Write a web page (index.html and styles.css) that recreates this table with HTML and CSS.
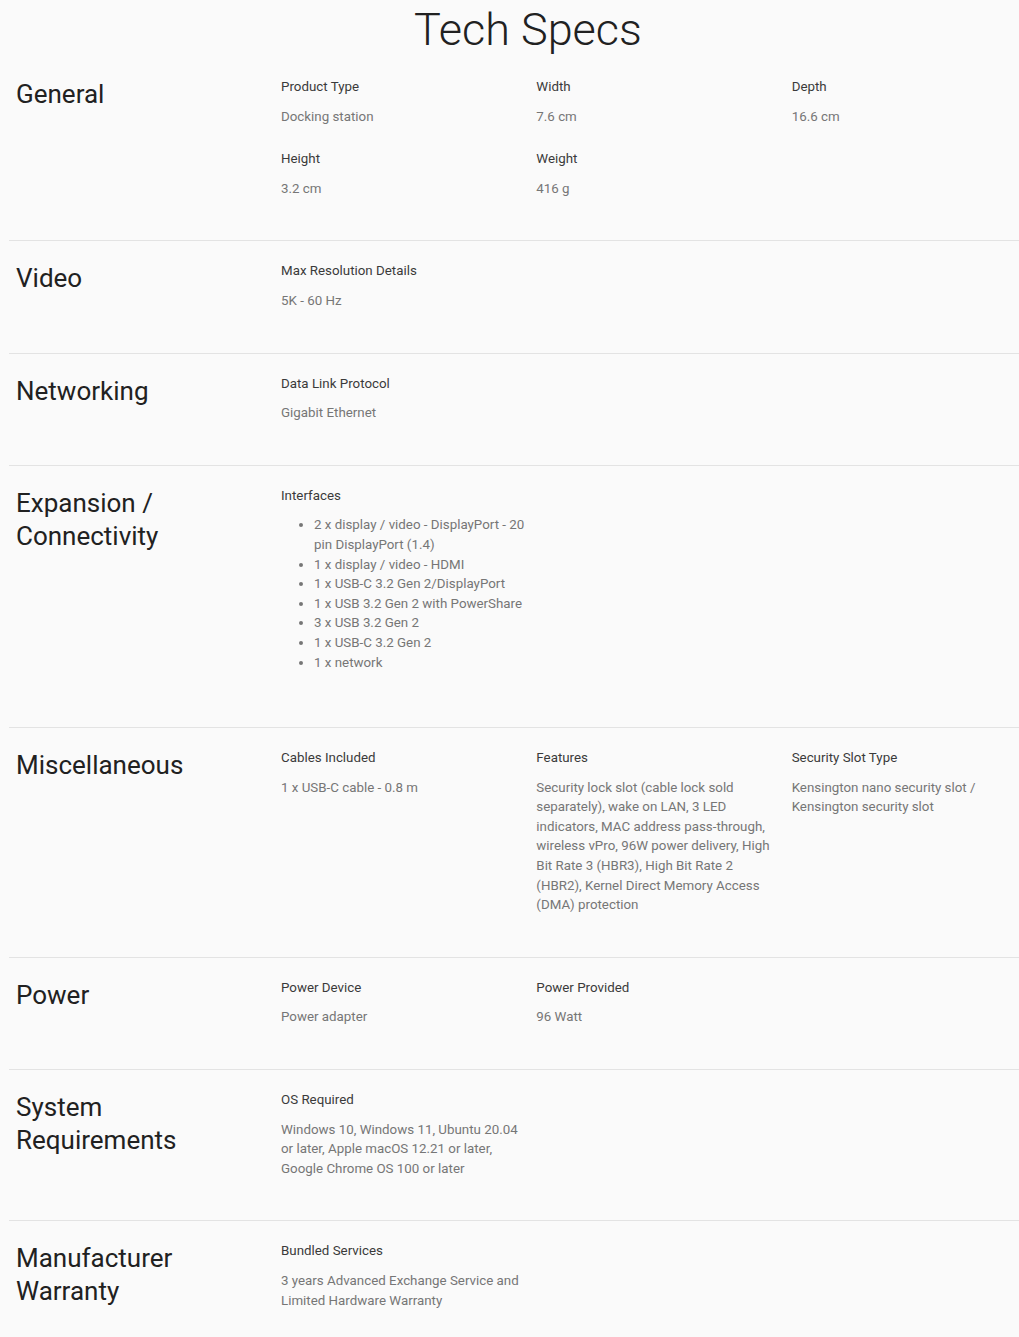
FILE: index.html
```html
<!DOCTYPE html>
<html lang="en">
<head>
<meta charset="utf-8">
<title>Tech Specs</title>
<link rel="stylesheet" href="styles.css">
</head>
<body>
<main class="specs">
  <h1 class="specs-title">Tech Specs</h1>

  <section class="spec-group spec-group--first">
    <h2 class="group-name">General</h2>
    <dl class="group-items">
      <div class="item"><dt class="item-label">Product Type</dt><dd class="item-value">Docking station</dd></div>
      <div class="item"><dt class="item-label">Width</dt><dd class="item-value">7.6 cm</dd></div>
      <div class="item"><dt class="item-label">Depth</dt><dd class="item-value">16.6 cm</dd></div>
      <div class="item"><dt class="item-label">Height</dt><dd class="item-value">3.2 cm</dd></div>
      <div class="item"><dt class="item-label">Weight</dt><dd class="item-value">416 g</dd></div>
    </dl>
  </section>

  <section class="spec-group">
    <h2 class="group-name">Video</h2>
    <dl class="group-items">
      <div class="item"><dt class="item-label">Max Resolution Details</dt><dd class="item-value">5K - 60 Hz</dd></div>
    </dl>
  </section>

  <section class="spec-group">
    <h2 class="group-name">Networking</h2>
    <dl class="group-items">
      <div class="item"><dt class="item-label">Data Link Protocol</dt><dd class="item-value">Gigabit Ethernet</dd></div>
    </dl>
  </section>

  <section class="spec-group">
    <h2 class="group-name">Expansion / Connectivity</h2>
    <dl class="group-items">
      <div class="item">
        <dt class="item-label">Interfaces</dt>
        <dd class="item-value">
          <ul class="value-list">
            <li>2 x display / video - DisplayPort - 20 pin DisplayPort (1.4)</li>
            <li>1 x display / video - HDMI</li>
            <li>1 x USB-C 3.2 Gen 2/DisplayPort</li>
            <li>1 x USB 3.2 Gen 2 with PowerShare</li>
            <li>3 x USB 3.2 Gen 2</li>
            <li>1 x USB-C 3.2 Gen 2</li>
            <li>1 x network</li>
          </ul>
        </dd>
      </div>
    </dl>
  </section>

  <section class="spec-group">
    <h2 class="group-name">Miscellaneous</h2>
    <dl class="group-items">
      <div class="item"><dt class="item-label">Cables Included</dt><dd class="item-value">1 x USB-C cable - 0.8 m</dd></div>
      <div class="item"><dt class="item-label">Features</dt><dd class="item-value">Security lock slot (cable lock sold separately), wake on LAN, 3 LED indicators, MAC address pass-through, wireless vPro, 96W power delivery, High Bit Rate 3 (HBR3), High Bit Rate 2 (HBR2), Kernel Direct Memory Access (DMA) protection</dd></div>
      <div class="item"><dt class="item-label">Security Slot Type</dt><dd class="item-value">Kensington nano security slot / Kensington security slot</dd></div>
    </dl>
  </section>

  <section class="spec-group">
    <h2 class="group-name">Power</h2>
    <dl class="group-items">
      <div class="item"><dt class="item-label">Power Device</dt><dd class="item-value">Power adapter</dd></div>
      <div class="item"><dt class="item-label">Power Provided</dt><dd class="item-value">96 Watt</dd></div>
    </dl>
  </section>

  <section class="spec-group">
    <h2 class="group-name">System Requirements</h2>
    <dl class="group-items">
      <div class="item"><dt class="item-label">OS Required</dt><dd class="item-value">Windows 10, Windows 11, Ubuntu 20.04 or later, Apple macOS 12.21 or later, Google Chrome OS 100 or later</dd></div>
    </dl>
  </section>

  <section class="spec-group">
    <h2 class="group-name">Manufacturer Warranty</h2>
    <dl class="group-items">
      <div class="item"><dt class="item-label">Bundled Services</dt><dd class="item-value">3 years Advanced Exchange Service and Limited Hardware Warranty</dd></div>
    </dl>
  </section>
</main>
</body>
</html>
```

FILE: styles.css
```css
html, body {
  margin: 0;
  padding: 0;
  overflow-x: hidden;
  background: #fafafa;
}

body {
  font-family: Roboto, "Liberation Sans", Arial, sans-serif;
  color: #212121;
}

.specs {
  width: 1038px;
  padding-left: 9px;
}

.specs-title {
  margin: 0;
  padding-top: 4px;
  height: 52px;
  font-size: 45px;
  line-height: 52px;
  font-weight: 300;
  text-align: center;
  color: #212121;
}

.spec-group {
  display: grid;
  grid-template-columns: 272px 1fr;
  border-top: 1px solid #e3e3e3;
  padding: 20px 0 42px;
}

.spec-group--first {
  border-top-color: transparent;
}

.group-name {
  margin: 1px 0 0;
  padding: 0 20px 0 7px;
  font-size: 26px;
  line-height: 33px;
  font-weight: 400;
  color: #212121;
}

.group-items {
  margin: 0;
  display: grid;
  grid-template-columns: repeat(3, 1fr);
  row-gap: 23px;
}

.item {
  padding-right: 12px;
  font-size: 13.33px;
  line-height: 19.6px;
}

.item-label {
  color: #3a3a3a;
}

.item-value {
  margin: 10px 0 0;
  color: #767676;
}

.value-list {
  margin: 0 0 13px;
  padding-left: 33px;
}
```
